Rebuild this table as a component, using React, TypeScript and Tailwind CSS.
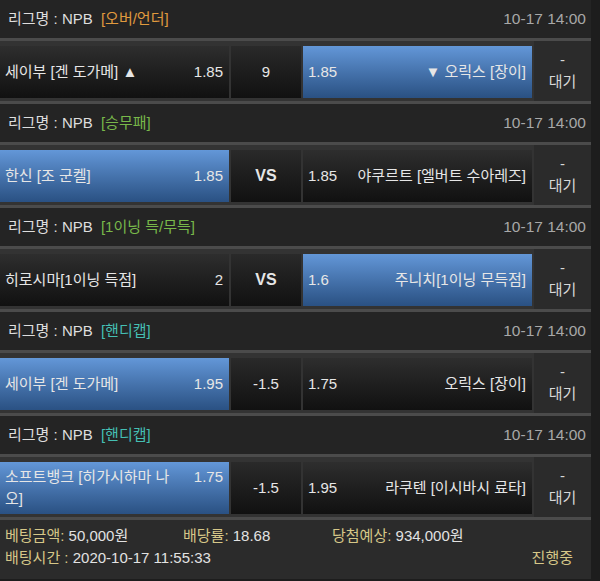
type Side = {
  name: string;
  odds: string;
  blue?: boolean;
};

type Match = {
  tag: string;
  tagColor: string;
  left: Side;
  mid: string;
  bold?: boolean;
  right: Side;
};

const matches: Match[] = [
  {
    tag: "[오버/언더]",
    tagColor: "text-[#e09a3e]",
    left: { name: "세이부 [겐 도가메] ▲", odds: "1.85" },
    mid: "9",
    right: { name: "▼ 오릭스 [장이]", odds: "1.85", blue: true },
  },
  {
    tag: "[승무패]",
    tagColor: "text-[#78b84a]",
    left: { name: "한신 [조 군켈]", odds: "1.85", blue: true },
    mid: "VS",
    bold: true,
    right: { name: "야쿠르트 [엘버트 수아레즈]", odds: "1.85" },
  },
  {
    tag: "[1이닝 득/무득]",
    tagColor: "text-[#78b84a]",
    left: { name: "히로시마[1이닝 득점]", odds: "2" },
    mid: "VS",
    bold: true,
    right: { name: "주니치[1이닝 무득점]", odds: "1.6", blue: true },
  },
  {
    tag: "[핸디캡]",
    tagColor: "text-[#45bfb3]",
    left: { name: "세이부 [겐 도가메]", odds: "1.95", blue: true },
    mid: "-1.5",
    right: { name: "오릭스 [장이]", odds: "1.75" },
  },
  {
    tag: "[핸디캡]",
    tagColor: "text-[#45bfb3]",
    left: { name: "소프트뱅크 [히가시하마 나오]", odds: "1.75", blue: true },
    mid: "-1.5",
    right: { name: "라쿠텐 [이시바시 료타]", odds: "1.95" },
  },
];

const cellBg = (blue?: boolean) =>
  blue
    ? "bg-linear-to-b from-[#6397d8] to-[#2a5183]"
    : "bg-linear-to-b from-[#2e2e2e] to-[#111111]";

const TeamCell = ({ side, flip }: { side: Side; flip?: boolean }) => (
  <div
    className={`w-[229px] h-[52px] flex items-center pl-[5px] pr-[6px] ${cellBg(side.blue)}`}
  >
    {flip ? (
      <div className="flex w-full items-baseline justify-between gap-2">
        <span className="shrink-0">{side.odds}</span>
        <span className="text-right">{side.name}</span>
      </div>
    ) : (
      <div className="flex w-full items-baseline justify-between">
        <span className="leading-[22px] flex-1">{side.name}</span>
        <span className="w-[46px] shrink-0 text-right">{side.odds}</span>
      </div>
    )}
  </div>
);

const MatchBlock = ({ m }: { m: Match }) => (
  <div>
    <div className="h-[41px] flex items-center justify-between px-[8px] bg-[#242424] border-b-[3px] border-[#4b4b4b]">
      <div className="text-[#dedede]">
        리그명 : NPB <span className={`ml-[4px] ${m.tagColor}`}>{m.tag}</span>
      </div>
      <div className="text-[15.5px] text-[#a8a8a8] -mr-[3px]">10-17 14:00</div>
    </div>
    <div className="flex gap-[2px] pt-[5px] pb-[3px] bg-[#333333] border-b-[3px] border-[#4b4b4b] text-[#e6e6e6]">
      <TeamCell side={m.left} />
      <div
        className={`w-[70px] h-[52px] flex items-center justify-center bg-linear-to-b from-[#2a2a2a] to-[#111111] ${
          m.bold ? "font-bold text-[16px]" : ""
        }`}
      >
        {m.mid}
      </div>
      <TeamCell side={m.right} flip />
      <div className="flex-1 flex flex-col items-center justify-center text-[#d8d8d8] leading-[22px] bg-[#2b2b2b] -mt-[5px] -mb-[3px]">
        <span>-</span>
        <span>대기</span>
      </div>
    </div>
  </div>
);

export default function App() {
  return (
    <div
      className="w-[600px] h-[581px] overflow-hidden bg-[#1d1d1d] text-[15px]"
      style={{ fontFamily: '"Liberation Sans", "Noto Sans CJK KR", sans-serif' }}
    >
      <div className="w-[591px] bg-[#2b2b2b]">
        {matches.map((m, i) => (
          <MatchBlock key={i} m={m} />
        ))}
        <div className="px-[5px] pt-[5px] pb-[10px] text-[#e2e2e2] leading-[22px]">
          <div className="flex">
            <div className="w-[178px]">
              <span className="text-[#d6c788]">베팅금액:</span> 50,000원
            </div>
            <div className="w-[149px]">
              <span className="text-[#d6c788]">배당률:</span> 18.68
            </div>
            <div>
              <span className="text-[#d6c788]">당첨예상:</span> 934,000원
            </div>
          </div>
          <div className="flex justify-between">
            <div>
              <span className="text-[#d6c788]">배팅시간 :</span> 2020-10-17 11:55:33
            </div>
            <span className="text-[#d6c788] mr-[13px]">진행중</span>
          </div>
        </div>
      </div>
    </div>
  );
}
